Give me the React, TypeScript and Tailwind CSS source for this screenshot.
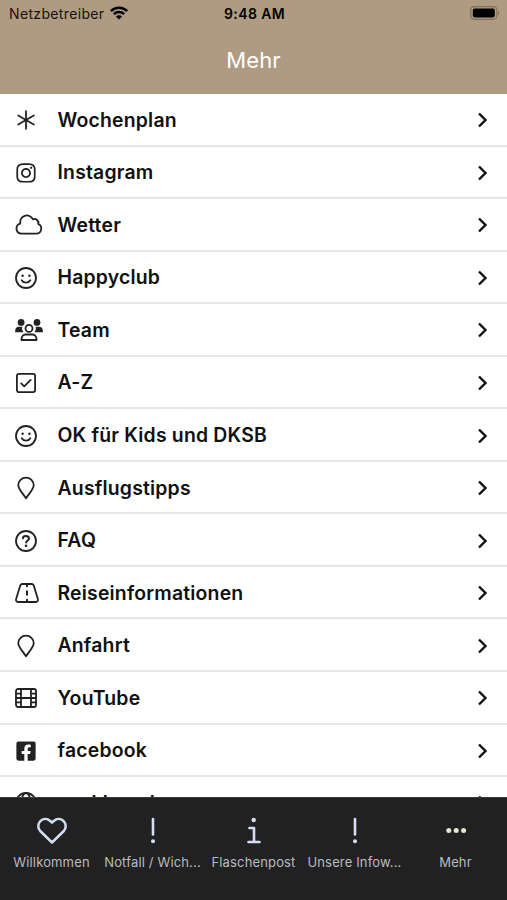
import type { ReactNode } from 'react'
import { FaFacebookSquare, FaInstagram } from 'react-icons/fa'

type IconName =
  | 'asterisk'
  | 'instagram'
  | 'cloud'
  | 'smile'
  | 'team'
  | 'check'
  | 'pin'
  | 'question'
  | 'road'
  | 'film'
  | 'facebook'
  | 'globe'

interface MenuItem {
  label: string
  icon: IconName
}

const menuItems: MenuItem[] = [
  { label: 'Wochenplan', icon: 'asterisk' },
  { label: 'Instagram', icon: 'instagram' },
  { label: 'Wetter', icon: 'cloud' },
  { label: 'Happyclub', icon: 'smile' },
  { label: 'Team', icon: 'team' },
  { label: 'A-Z', icon: 'check' },
  { label: 'OK für Kids und DKSB', icon: 'smile' },
  { label: 'Ausflugstipps', icon: 'pin' },
  { label: 'FAQ', icon: 'question' },
  { label: 'Reiseinformationen', icon: 'road' },
  { label: 'Anfahrt', icon: 'pin' },
  { label: 'YouTube', icon: 'film' },
  { label: 'facebook', icon: 'facebook' },
  { label: 'seakbeach', icon: 'globe' },
]

const iconShapes: Record<IconName, ReactNode> = {
  asterisk: <path d="M11 2.2v17.6M3.2 6.5l15.6 9M18.8 6.5l-15.6 9" />,
  instagram: <FaInstagram x={0} y={0} size={22} strokeWidth={0} />,
  cloud: (
    <path d="M6 19.6h15.2a5 5 0 0 0 2-9.600 3.900 3.900 0 0 0-5.300-4.700A6.700 6.700 0 0 0 5.300 9.600 5.100 5.100 0 0 0 6 19.600z" />
  ),
  smile: (
    <>
      <circle cx="11" cy="11" r="10" />
      <path d="M6.7 13.2c1.9 3.2 6.7 3.2 8.6 0" />
      <circle cx="7.6" cy="8.8" r="1.2" fill="currentColor" stroke="none" />
      <circle cx="14.4" cy="8.8" r="1.2" fill="currentColor" stroke="none" />
    </>
  ),
  team: (
    <>
      <g fill="currentColor" stroke="none">
        <circle cx="6.1" cy="3.4" r="3.4" />
        <circle cx="22" cy="3.4" r="3.4" />
        <path d="M.2 13.3v-1.5a4 4 0 0 1 4-4h3.100c-.6 2 .1 4 1.300 5.500zM27.800 13.300v-1.500a4 4 0 0 0-4-4h-3.100c.6 2-.1 4-1.300 5.500z" />
      </g>
      <circle cx="14" cy="9.4" r="3.5" />
      <path d="M6.5 21v-1.300a4.400 4.400 0 0 1 4.400-4.200h6.200a4.400 4.400 0 0 1 4.400 4.200V21z" />
    </>
  ),
  check: (
    <>
      <rect x="1.9" y="1.9" width="18.2" height="18.2" rx="2" />
      <path d="M6.2 11.4l3.1 3 6.4-6.5" />
    </>
  ),
  pin: <path d="M11 21.300C7.800 16.400 3.300 11.900 3.300 8.200a7.700 7.500 0 0 1 15.400 0c0 3.700-4.500 8.200-7.700 13.100z" />,
  question: (
    <>
      <circle cx="11" cy="11" r="10" />
      <path d="M8 8.300c0-1.500 1.100-2.200 2.900-2.200s3.100.9 3.100 2.500c0 2.100-2.900 2.100-2.900 4" strokeWidth="2" />
      <circle cx="11" cy="15.7" r="1.3" fill="currentColor" stroke="none" />
    </>
  ),
  road: (
    <>
      <path d="M5.300 3.300a2.200 2.200 0 0 1 2-1.300h9.400a2.200 2.200 0 0 1 2 1.300l4.100 13.500a2.200 2.200 0 0 1-2 3.200H3.200a2.200 2.200 0 0 1-2-3.200z" />
      <path d="M12 2v2.300M12 9.200v3.600M12 17.700V20" strokeWidth="2" />
    </>
  ),
  film: (
    <>
      <rect x="1" y="2" width="20" height="18" rx="2" />
      <path d="M6 2v18M16 2v18M6 11h10M1 6.600h5M1 11h5M1 15.400h5M16 6.600h5M16 11h5M16 15.400h5" />
    </>
  ),
  facebook: <FaFacebookSquare x={0} y={0} size={22} strokeWidth={0} />,
  globe: (
    <>
      <circle cx="11" cy="11" r="10" />
      <ellipse cx="11" cy="11" rx="4.5" ry="10" />
      <path d="M2 7h18M2 15h18" />
    </>
  ),
}

const wideIcons: IconName[] = ['cloud', 'team']

function MenuIcon({ name }: { name: IconName }) {
  const width = wideIcons.includes(name) ? 28 : name === 'road' ? 24 : 22

  return (
    <svg
      width={width}
      height="22"
      viewBox={`0 0 ${width} 22`}
      className="shrink-0 overflow-visible"
      fill="none"
      stroke="currentColor"
      strokeWidth="1.8"
      strokeLinecap="round"
      strokeLinejoin="round"
    >
      {iconShapes[name]}
    </svg>
  )
}

function StatusBar() {
  return (
    <div className="flex h-[26px] items-center pr-[7px] pl-[9px] text-[14px] text-[#17120d]">
      <div className="flex flex-1 items-center gap-1.5">
        <span className="tracking-[0.35px]">Netzbetreiber</span>
        <svg width="18" height="14" viewBox="0 0 18 14" fill="none" stroke="#000" strokeWidth="2.500">
          <path d="M.9 5.100a11.600 11.600 0 0 1 16.200 0M3.900 8.100a7.300 7.300 0 0 1 10.200 0" />
          <path d="M9 13.600L5.900 10.500a4.400 4.400 0 0 1 6.200 0z" fill="#000" stroke="none" />
        </svg>
      </div>
      <span className="text-center font-semibold tracking-[0.4px] text-black">9:48 AM</span>
      <div className="flex flex-1 justify-end">
        <svg width="30" height="14" viewBox="0 0 30 14">
          <rect x=".8" y=".7" width="26" height="12.6" rx="3.5" fill="none" stroke="#80725b" strokeWidth="1.2" />
          <rect x="2.8" y="2.6" width="22" height="8.8" rx="1.8" fill="#000" />
          <path d="M28 4.800c1.800.7 1.800 3.700 0 4.400z" fill="#80725b" />
        </svg>
      </div>
    </div>
  )
}

function MenuRow({ item }: { item: MenuItem }) {
  return (
    <li className="flex h-[52.55px] shrink-0 items-center border-b-2 border-[#e7e7e7] pt-[2px] pr-[18px] pl-[15px]">
      <div className="flex w-[42.5px] shrink-0 items-center text-[#222]">
        <MenuIcon name={item.icon} />
      </div>
      <span className="flex-1 text-[19.4px] font-semibold tracking-[0.2px] text-[#111]">{item.label}</span>
      <svg width="12" height="16" viewBox="0 0 12 16" fill="none" stroke="#111" strokeWidth="2.400">
        <path d="M2 1.500L8.500 8 2 14.500" />
      </svg>
    </li>
  )
}

function ExclamationShape() {
  return (
    <>
      <path d="M16 4v15.500" strokeWidth="2.600" />
      <circle cx="16" cy="26.3" r="2" fill="currentColor" stroke="none" />
    </>
  )
}

const tabs: Array<{ label: string; icon: ReactNode }> = [
  {
    label: 'Willkommen',
    icon: (
      <path d="M16 27.500L4.200 16C-1.500 10 6.700-.6 14.300 6L16 7.700 17.700 6C25.300-.6 33.500 10 27.800 16z" />
    ),
  },
  { label: 'Notfall / Wich...', icon: <ExclamationShape /> },
  {
    label: 'Flaschenpost',
    icon: (
      <>
        <path d="M11.500 13H16v14M10.500 27h11" strokeWidth="2.600" />
        <circle cx="15.7" cy="5" r="2.2" fill="currentColor" stroke="none" />
      </>
    ),
  },
  { label: 'Unsere Infow...', icon: <ExclamationShape /> },
  {
    label: 'Mehr',
    icon: (
      <g fill="#e3e6d3" stroke="none">
        <circle cx="8.8" cy="15.5" r="2.5" />
        <circle cx="16.2" cy="15.5" r="2.5" />
        <circle cx="23.6" cy="15.5" r="2.5" />
      </g>
    ),
  },
]

function TabBar() {
  return (
    <nav className="grid h-[103px] shrink-0 grid-cols-5 border-t border-[#393939] bg-[#212121] px-[1px] pt-[17px]">
      {tabs.map((tab) => (
        <button key={tab.label} type="button" className="flex min-w-0 flex-col items-center text-[#d3def5]">
          <svg
            width="32"
            height="32"
            viewBox="0 0 32 32"
            fill="none"
            stroke="currentColor"
            strokeWidth="2.500"
            strokeLinecap="round"
            strokeLinejoin="round"
          >
            {tab.icon}
          </svg>
          <span className="mt-[5px] text-[13px] leading-5 tracking-[0.15px] whitespace-nowrap text-[#b9bbc0]">
            {tab.label}
          </span>
        </button>
      ))}
    </nav>
  )
}

export default function App() {
  return (
    <div className="flex h-screen w-full flex-col overflow-hidden bg-white font-['Inter',sans-serif]">
      <header className="h-[94px] shrink-0 bg-[#ae9b82]">
        <StatusBar />
        <h1 className="mt-[18px] text-center text-[22px] leading-8 tracking-[0.1px] text-white">Mehr</h1>
      </header>

      <ul className="flex min-h-0 flex-1 flex-col overflow-hidden">
        {menuItems.map((item) => (
          <MenuRow key={item.label} item={item} />
        ))}
      </ul>

      <TabBar />
    </div>
  )
}
